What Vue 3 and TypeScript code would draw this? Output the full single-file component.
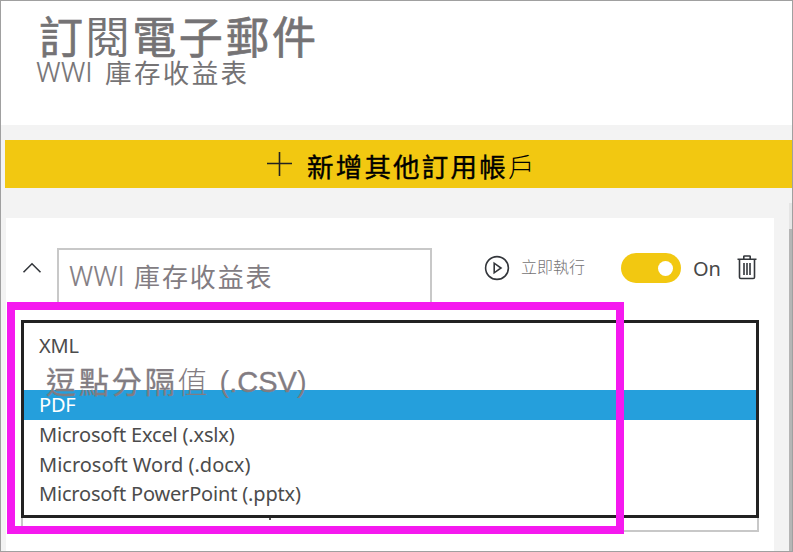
<script setup lang="ts">
import { ref } from 'vue'

interface Format {
  id: string
  label: string
}

const formats: Format[] = [
  { id: 'xml', label: 'XML' },
  { id: 'csv', label: '逗點分隔值' },
  { id: 'pdf', label: 'PDF' },
  { id: 'excel', label: 'Microsoft Excel (.xslx)' },
  { id: 'word', label: 'Microsoft Word (.docx)' },
  { id: 'powerpoint', label: 'Microsoft PowerPoint (.pptx)' },
]
const selected = ref('pdf')
const enabled = ref(true)
</script>

<template>
  <main class="pane">
    <header class="head">
      <h1>訂<span class="thin">閱</span>電子郵件</h1>
      <p class="subtitle"><span class="latin">WWI</span><span>庫存收益表</span></p>
    </header>

    <button class="add">
      <svg width="26" height="26" viewBox="0 0 26 26"><path d="M13.5 1v24M1 12.5h25" /></svg>
      <span>新增其他訂用帳<span class="thin">戶</span></span>
    </button>

    <div class="body">
      <section class="card">
        <div class="row">
          <svg class="chevron" width="20" height="12" viewBox="0 0 20 12"><path d="M1.5 10.2 10 1.8l8.5 8.4" /></svg>
          <div class="name"><span class="latin">WWI</span><span>庫存收益表</span></div>
          <button class="run">
            <svg width="26" height="26" viewBox="0 0 26 26">
              <circle cx="13" cy="13" r="11.4" />
              <path d="M10.2 8.2v9.6L17 13z" />
            </svg>
            <span>立即執行</span>
          </button>
          <button class="toggle" :class="{ on: enabled }" @click="enabled = !enabled"><i></i></button>
          <span class="state">On</span>
          <svg class="trash" width="20" height="25" viewBox="0 0 20 25">
            <path d="M.5 4.200h19M6.800 4V1.600Q6.800 1 7.500 1h5q.7 0 .7.600V4M2.500 4.500v17.700q0 1.300 1.300 1.300h12.400q1.300 0 1.300-1.300V4.500M7 8v12M10 8v12M13 8v12" />
          </svg>
        </div>

        <div class="format">
          <ul class="menu">
            <li
              v-for="f in formats"
              :key="f.id"
              :class="[f.id, { selected: f.id === selected }]"
              @click="selected = f.id"
            >
              <template v-if="f.id === 'csv'"><span>逗點分隔<span class="thin">值</span></span><span class="csv-ext"><span class="thin">(</span>.CSV<span class="thin">)</span></span></template>
              <span v-else>{{ f.label }}</span>
            </li>
          </ul>
          <i class="descender"></i>
        </div>
      </section>
      <div class="scrollbar"><i></i></div>
    </div>

    <div class="highlight"></div>
  </main>
</template>

<style>
body {
  margin: 0;
}
</style>

<style scoped>
* {
  box-sizing: border-box;
}
.pane {
  position: relative;
  display: flex;
  flex-direction: column;
  width: 793px;
  height: 552px;
  overflow: hidden;
  border: 1px solid #a0a0a0;
  background: #f3f3f3;
  color: #757375;
  font-family: "Noto Sans", "Noto Sans CJK TC", sans-serif;
}
button {
  border: 0;
  padding: 0;
  background: none;
  font-family: inherit;
}
svg {
  flex: none;
  fill: none;
  stroke: #33363b;
  stroke-width: 1.6;
}
.head {
  flex: none;
  height: 124px;
  padding: 10px 0 0 38px;
  background: #fff;
}
h1 {
  margin: 0;
  height: 46px;
  font: 400 44px/48px "Noto Sans CJK TC", sans-serif;
  letter-spacing: 2.6px;
  -webkit-text-stroke: 0.7px #757375;
  white-space: nowrap;
}
.subtitle,
.name {
  display: flex;
  font: 400 26.500px/30px "Noto Sans CJK TC", sans-serif;
  letter-spacing: 2.4px;
  white-space: nowrap;
}
.subtitle {
  margin: 0 0 0 -3px;
}
.latin {
  width: 69px;
  padding-top: 1px;
  font-family: Roboto, sans-serif;
  font-size: 27.500px;
  font-weight: 300;
  letter-spacing: 0;
  -webkit-text-stroke: 0.2px currentColor;
}
.add {
  display: flex;
  flex: none;
  align-items: center;
  gap: 15px;
  height: 48px;
  margin: 15px 0 0 4px;
  padding-left: 261px;
  background: #f2c811;
  color: #000;
  font: 400 26.500px/48px "Noto Sans CJK TC", sans-serif;
  letter-spacing: 2.2px;
}
.add > span {
  padding-top: 4px;
  -webkit-text-stroke: 0.4px #000;
}
.add svg {
  stroke: #222;
}
h1 .thin,
.add .thin,
.csv .thin {
  -webkit-text-stroke: 0;
}
.add .thin,
.csv .thin {
  font-weight: 300;
}
.body {
  display: flex;
  flex: 1;
  justify-content: space-between;
}
.card {
  width: 768px;
  margin: 30px 0 0 5px;
  padding: 30px 15px 0;
  background: #fff;
}
.row {
  display: flex;
  height: 72px;
}
.chevron {
  margin: 14px 0 0 1px;
}
.name {
  flex: none;
  width: 375px;
  height: 56px;
  margin-left: 15px;
  padding: 11px 0 0 10px;
  border: 2px solid #c8c8c8;
  border-bottom: 0;
  color: #827c82;
  font-size: 26px;
  letter-spacing: 1.9px;
}
.name .latin {
  width: 65px;
  font-size: 27px;
}
.run {
  display: flex;
  flex: none;
  align-items: center;
  gap: 11px;
  width: 137px;
  height: 40px;
  margin-left: 52px;
  color: #757375;
  font: 300 16px/24px "Noto Sans CJK TC", sans-serif;
  white-space: nowrap;
}
.run span {
  padding-bottom: 4px;
}
.toggle {
  display: flex;
  flex: none;
  align-items: center;
  width: 60px;
  height: 30px;
  margin-top: 5px;
  padding: 0 8px;
  border-radius: 15px;
  background: #999;
}
.toggle.on {
  justify-content: flex-end;
  background: #f2c811;
}
.toggle i {
  width: 15px;
  height: 15px;
  border-radius: 50%;
  background: #fff;
}
.state {
  flex: none;
  width: 56px;
  padding: 6px 0 0 12px;
  color: #484848;
  font-size: 20px;
  line-height: 30px;
}
.trash {
  margin-top: 7px;
}
.format {
  position: relative;
  width: 738px;
  height: 212px;
  border: solid #c8c8c8;
  border-width: 0 2px 2px;
}
.menu {
  width: 738px;
  height: 198px;
  margin: 0 -2px;
  padding: 8px 0 0;
  border: 3px solid #222;
  background: #fff;
  list-style: none;
  color: #4c4c4c;
  font-size: 20px;
  letter-spacing: -0.18px;
}
.menu .word {
  letter-spacing: 0;
}
.menu li {
  height: 29.500px;
  padding-left: 15px;
  line-height: 29px;
  white-space: nowrap;
}
.menu .selected {
  height: 30px;
  background: #259fdc;
  color: #fff;
}
.menu .csv {
  position: relative;
  z-index: 1;
  display: flex;
  padding: 4px 0 0 22px;
  color: #827c82;
  font: 400 30px/30px "Noto Sans CJK TC", sans-serif;
  letter-spacing: 2.9px;
  -webkit-text-stroke: 0.3px #827c82;
}
.csv-ext {
  margin: 2px 0 0 9px;
  font-family: "Liberation Sans", sans-serif;
  font-size: 29px;
  letter-spacing: 0;
}
.descender {
  position: absolute;
  left: 246px;
  top: 198px;
  width: 2px;
  height: 2px;
  background: #555;
}
.scrollbar {
  width: 3px;
  margin-top: 15px;
  background: #e5e5e5;
}
.scrollbar i {
  display: block;
  height: 100%;
  border-top: 26px solid #e5e5e5;
  background: #b5b5b5;
}
.highlight {
  position: absolute;
  z-index: 2;
  left: 6px;
  top: 301px;
  width: 617px;
  height: 232px;
  border: 8px solid #f519ef;
}
</style>
